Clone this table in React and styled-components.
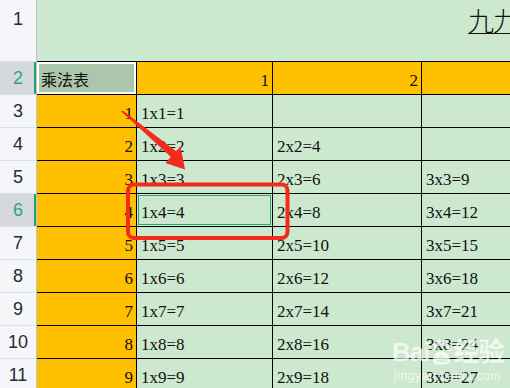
import React from "react";
import styled, { createGlobalStyle } from "styled-components";

const GlobalStyle = createGlobalStyle`
	html, body {
		margin: 0;
		padding: 0;
		background: #cce8cf;
	}
	* { box-sizing: border-box; }
`;

const Page = styled.div`
	position: relative;
	width: 510px;
	height: 388px;
	overflow: hidden;
	background: #cce8cf;
`;

const Sheet = styled.div`
	display: grid;
	grid-template-columns: 37px 100px 136px 149px 120px;
	grid-template-rows: 62px repeat(10, 33px);
	font-family: "Liberation Serif", "Noto Sans CJK SC", serif;
	font-size: 17px;
	color: #111;
`;

const RowHead = styled.div`
	display: flex;
	justify-content: center;
	align-items: ${props => props.$top ? "flex-start" : "center"};
	padding-top: ${props => props.$top ? "9px" : "0"};
	background: ${props => props.$active ? "#d5d9df" : "#f4f6f9"};
	color: ${props => props.$active ? "#2da574" : "#2b2b2b"};
	border-right: 1px solid #bcc5d3;
	border-bottom: 1px solid #dde2e9;
	box-shadow: ${props => props.$active ? "inset -2px 0 0 #22a36a" : "none"};
	font-family: "Liberation Sans", "Noto Sans", sans-serif;
	font-size: 18px;
`;

const TitleCell = styled.div`
	grid-column: 2 / -1;
	border-bottom: 1px solid #000;
	padding: 5px 0 0 431px;
	white-space: nowrap;
	overflow: hidden;
`;

const Title = styled.span`
	font-family: "Noto Sans CJK SC", sans-serif;
	font-size: 26px;
	line-height: 30px;
	font-weight: 300;
	text-decoration: underline;
	text-underline-offset: 2px;
	text-decoration-thickness: 1px;
	letter-spacing: -1px;
`;

const Cell = styled.div`
	display: flex;
	align-items: flex-end;
	justify-content: ${props => props.$right ? "flex-end" : "flex-start"};
	padding: 0 ${props => props.$right ? "3px" : "0"} 3px ${props => props.$right ? "0" : "4px"};
	line-height: 20px;
	white-space: nowrap;
	overflow: hidden;
	background: ${props => props.$fill || "#cce8cf"};
	border-right: 1px solid #000;
	border-bottom: 1px solid #000;
	box-shadow: ${props => props.$ring || "none"};
`;

const CornerCell = styled(Cell)`
	font-family: "Noto Sans CJK SC", sans-serif;
	font-size: 16px;
	padding-bottom: 5px;
	padding-left: 4px;
	background: #abc6ab;
	box-shadow: inset 0 0 0 2px #fff;
`;

const Overlay = styled.svg`
	position: absolute;
	left: 0;
	top: 0;
	pointer-events: none;
`;

const Watermark = styled.div`
	position: absolute;
	left: 392px;
	top: 336px;
	display: flex;
	flex-direction: column;
	color: rgba(255, 255, 255, 0.72);
	pointer-events: none;
`;

const MarkLine = styled.div`
	display: flex;
	align-items: center;
	font-family: "Liberation Sans", "Noto Sans CJK SC", sans-serif;
	font-size: 26px;
	font-weight: bold;
	line-height: 32px;
	letter-spacing: -1px;
`;

const MarkSub = styled.div`
	font-family: "Liberation Sans", sans-serif;
	font-size: 12px;
	letter-spacing: 0.6px;
	margin-top: 1px;
	padding-left: 2px;
`;

const ORANGE = "#ffc000";
const rows = [1, 2, 3, 4, 5, 6, 7, 8, 9];

const Paw = () => (
	<svg width="24" height="26" viewBox="0 0 24 26">
		<g fill="rgba(255,255,255,0.72)">
			<ellipse cx="5" cy="8" rx="2.6" ry="3.2" />
			<ellipse cx="10" cy="4" rx="2.6" ry="3.2" />
			<ellipse cx="16" cy="4" rx="2.6" ry="3.2" />
			<ellipse cx="20.5" cy="9" rx="2.4" ry="3" />
			<path d="M4 22 C4 15 9 12 12.5 12 C16 12 21 15 21 22 C21 25 18 25.5 12.5 25.5 C7 25.5 4 25 4 22 Z" />
		</g>
		<text x="12.5" y="23" textAnchor="middle" fontSize="9" fontFamily="Liberation Sans, sans-serif" fontWeight="bold" fill="#cce8cf">du</text>
	</svg>
);

const Arrow = () => (
	<g fill="#f42a1c">
		<polygon points="121.3,111.6 122.7,110.4 176.5,151.5 171.5,157.5" />
		<polygon points="185,169.5 165.5,163 172.5,155 180.5,146.5" />
	</g>
);

const App = () => (
	<>
		<GlobalStyle />
		<Page>
			<Sheet>
				<RowHead $top>1</RowHead>
				<TitleCell><Title>九九乘法表</Title></TitleCell>

				<RowHead $active>2</RowHead>
				<CornerCell>乘法表</CornerCell>
				<Cell $right $fill={ORANGE}>1</Cell>
				<Cell $right $fill={ORANGE}>2</Cell>
				<Cell $right $fill={ORANGE}>3</Cell>

				{rows.map(i => (
					<React.Fragment key={i}>
						<RowHead $active={i === 4}>{i + 2}</RowHead>
						<Cell $right $fill={ORANGE}>{i}</Cell>
						<Cell $ring={i === 4 ? "inset 0 0 0 1px #cce8cf, inset 0 0 0 2px #2aa86e" : null}>1x{i}={i}</Cell>
						<Cell>{i >= 2 ? `2x${i}=${2 * i}` : ""}</Cell>
						<Cell>{i >= 3 ? `3x${i}=${3 * i}` : ""}</Cell>
					</React.Fragment>
				))}
			</Sheet>

			<Watermark>
				<MarkLine>Bai<Paw />经验</MarkLine>
				<MarkSub>jingyan.baidu.com</MarkSub>
			</Watermark>

			<Overlay width="510" height="388" viewBox="0 0 510 388">
				<rect x="128" y="184.5" width="159.5" height="53.5" rx="6" fill="none" stroke="#f42a1c" strokeWidth="4" />
				<Arrow />
			</Overlay>
		</Page>
	</>
);

export default App;
